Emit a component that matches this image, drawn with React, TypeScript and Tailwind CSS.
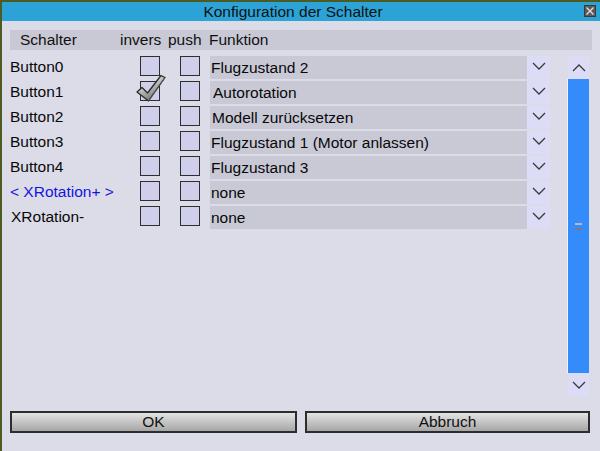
import React from "react";

const rows = [
  { label: "Button0", fn: "Flugzustand 2", blue: false, check: false },
  { label: "Button1", fn: "Autorotation", blue: false, check: true },
  { label: "Button2", fn: "Modell zurücksetzen", blue: false, check: false },
  { label: "Button3", fn: "Flugzustand 1 (Motor anlassen)", blue: false, check: false },
  { label: "Button4", fn: "Flugzustand 3", blue: false, check: false },
  { label: "< XRotation+ >", fn: "none", blue: true, check: false },
  { label: "XRotation-", fn: "none", blue: false, check: false },
];

function Chevron({ up = false }: { up?: boolean }) {
  return (
    <svg width="14" height="8" viewBox="0 0 14 8" className="block">
      <path
        d={up ? "M1 7 L7 1 L13 7" : "M1 1 L7 7 L13 1"}
        fill="none"
        stroke="#3a3a3a"
        strokeWidth="1.3"
      />
    </svg>
  );
}

function CheckMark() {
  return (
    <svg width="32" height="30" viewBox="0 0 32 30" className="absolute left-[-5px] top-[-8px] pointer-events-none">
      <defs>
        <linearGradient id="cg" x1="0" y1="0" x2="0.6" y2="1">
          <stop offset="0" stopColor="#ffffff" />
          <stop offset="0.45" stopColor="#c8c8c8" />
          <stop offset="1" stopColor="#6a6a6a" />
        </linearGradient>
      </defs>
      <path
        d="M1 18 L6 13.5 L11.5 19 L25 1.5 L29 3.5 L12.5 27 Z"
        fill="url(#cg)"
        stroke="#2a2a2a"
        strokeWidth="1.3"
        strokeLinejoin="round"
      />
      <path d="M12.5 27 L29 3.5" stroke="#555" strokeWidth="1" />
    </svg>
  );
}

export default function App() {
  const font = { fontFamily: '"Liberation Sans", Arial, sans-serif' };
  return (
    <div className="w-[600px] h-[451px] flex bg-[#4d5a22] overflow-hidden" style={font}>
      <div className="w-[2px] shrink-0" />
      <div className="flex-1 flex flex-col mt-[2px]">
        <div className="h-[19px] bg-[#2ba3d6] flex items-center relative">
          <div className="w-[582px] text-center text-[15.5px] leading-[19px] text-[#101010]">
            Konfiguration der Schalter
          </div>
          <div className="absolute left-[582px] top-[3px] w-[12px] h-[12px] bg-[#5b5b5b] border border-[#3a3a3a] flex items-center justify-center">
            <svg width="10" height="10" viewBox="0 0 10 10">
              <path d="M1.5 1.5 L8.5 8.5 M8.5 1.5 L1.5 8.5" stroke="#e0e0e0" strokeWidth="1.3" />
            </svg>
          </div>
        </div>
        <div className="flex-1 bg-[#dcdce8] flex flex-col pt-[9px]">
          <div className="ml-[8px] w-[582px] h-[20px] bg-[#c9c9d6] flex items-center text-[15.5px] text-[#101010]">
            <span className="ml-[10px] w-[100px]">Schalter</span>
            <span className="w-[48px]">invers</span>
            <span className="w-[41px]">push</span>
            <span>Funktion</span>
          </div>
          <div className="flex mt-[6px] h-[340px]">
            <div className="flex flex-col gap-[2px] w-[548px]">
              {rows.map((r, i) => (
                <div key={i} className="flex h-[23px] items-start">
                  <div
                    className={`w-[138px] h-[21px] flex items-center text-[15.5px] ${
                      r.blue ? "text-[#1414dc]" : "text-[#080808]"
                    } ${i === 6 ? "pl-[9px]" : "pl-[8px]"}`}
                  >
                    {r.label}
                  </div>
                  <div className="relative w-[20px] h-[20px] border border-[#2e2e2e] bg-[#cfcfec]">
                    {r.check && <CheckMark />}
                  </div>
                  <div className="ml-[20px] w-[20px] h-[20px] border border-[#2e2e2e] bg-[#cfcfec]" />
                  <div className="ml-[10px] w-[317px] h-[23px] bg-[#c9c9d6] flex items-center text-[15.5px] text-[#080808]">
                    <span className={i === 1 ? "pl-[3px]" : i === 2 ? "pl-[2px]" : "pl-[1px]"}>{r.fn}</span>
                  </div>
                  <div className="w-[23px] h-[23px] bg-[#dcdcf6] flex items-start justify-center pt-[6px]">
                    <Chevron />
                  </div>
                </div>
              ))}
            </div>
            <div className="ml-[17px] w-[22px] flex flex-col">
              <div className="h-[23px] bg-[#dcdcf6] flex items-center justify-center ml-[1px]">
                <Chevron up />
              </div>
              <div className="flex-1 flex">
                <div className="w-[1px] bg-[#f2f2ff]" />
                <div className="flex-1 bg-[#338cfa] flex items-center justify-center">
                  <div className="flex flex-col gap-[3px]">
                    <div className="w-[7px] h-[2px] bg-[#b8b8c4]" />
                    <div className="w-[7px] h-[2px] bg-[#7a7a86]" />
                  </div>
                </div>
              </div>
              <div className="h-[23px] bg-[#dcdcf6] flex items-center justify-center ml-[1px]">
                <Chevron />
              </div>
            </div>
          </div>
          <div className="flex mt-[15px] ml-[8px] gap-[8px]">
            <button className="w-[287px] h-[22px] border-2 border-[#2d2d2d] bg-gradient-to-b from-[#e4e4e4] to-[#a6a6a6] text-[15.5px] leading-[18px] text-[#101010] text-center">
              OK
            </button>
            <button className="w-[285px] h-[22px] border-2 border-[#2d2d2d] bg-gradient-to-b from-[#e4e4e4] to-[#a6a6a6] text-[15.5px] leading-[18px] text-[#101010] text-center">
              Abbruch
            </button>
          </div>
        </div>
      </div>
    </div>
  );
}
